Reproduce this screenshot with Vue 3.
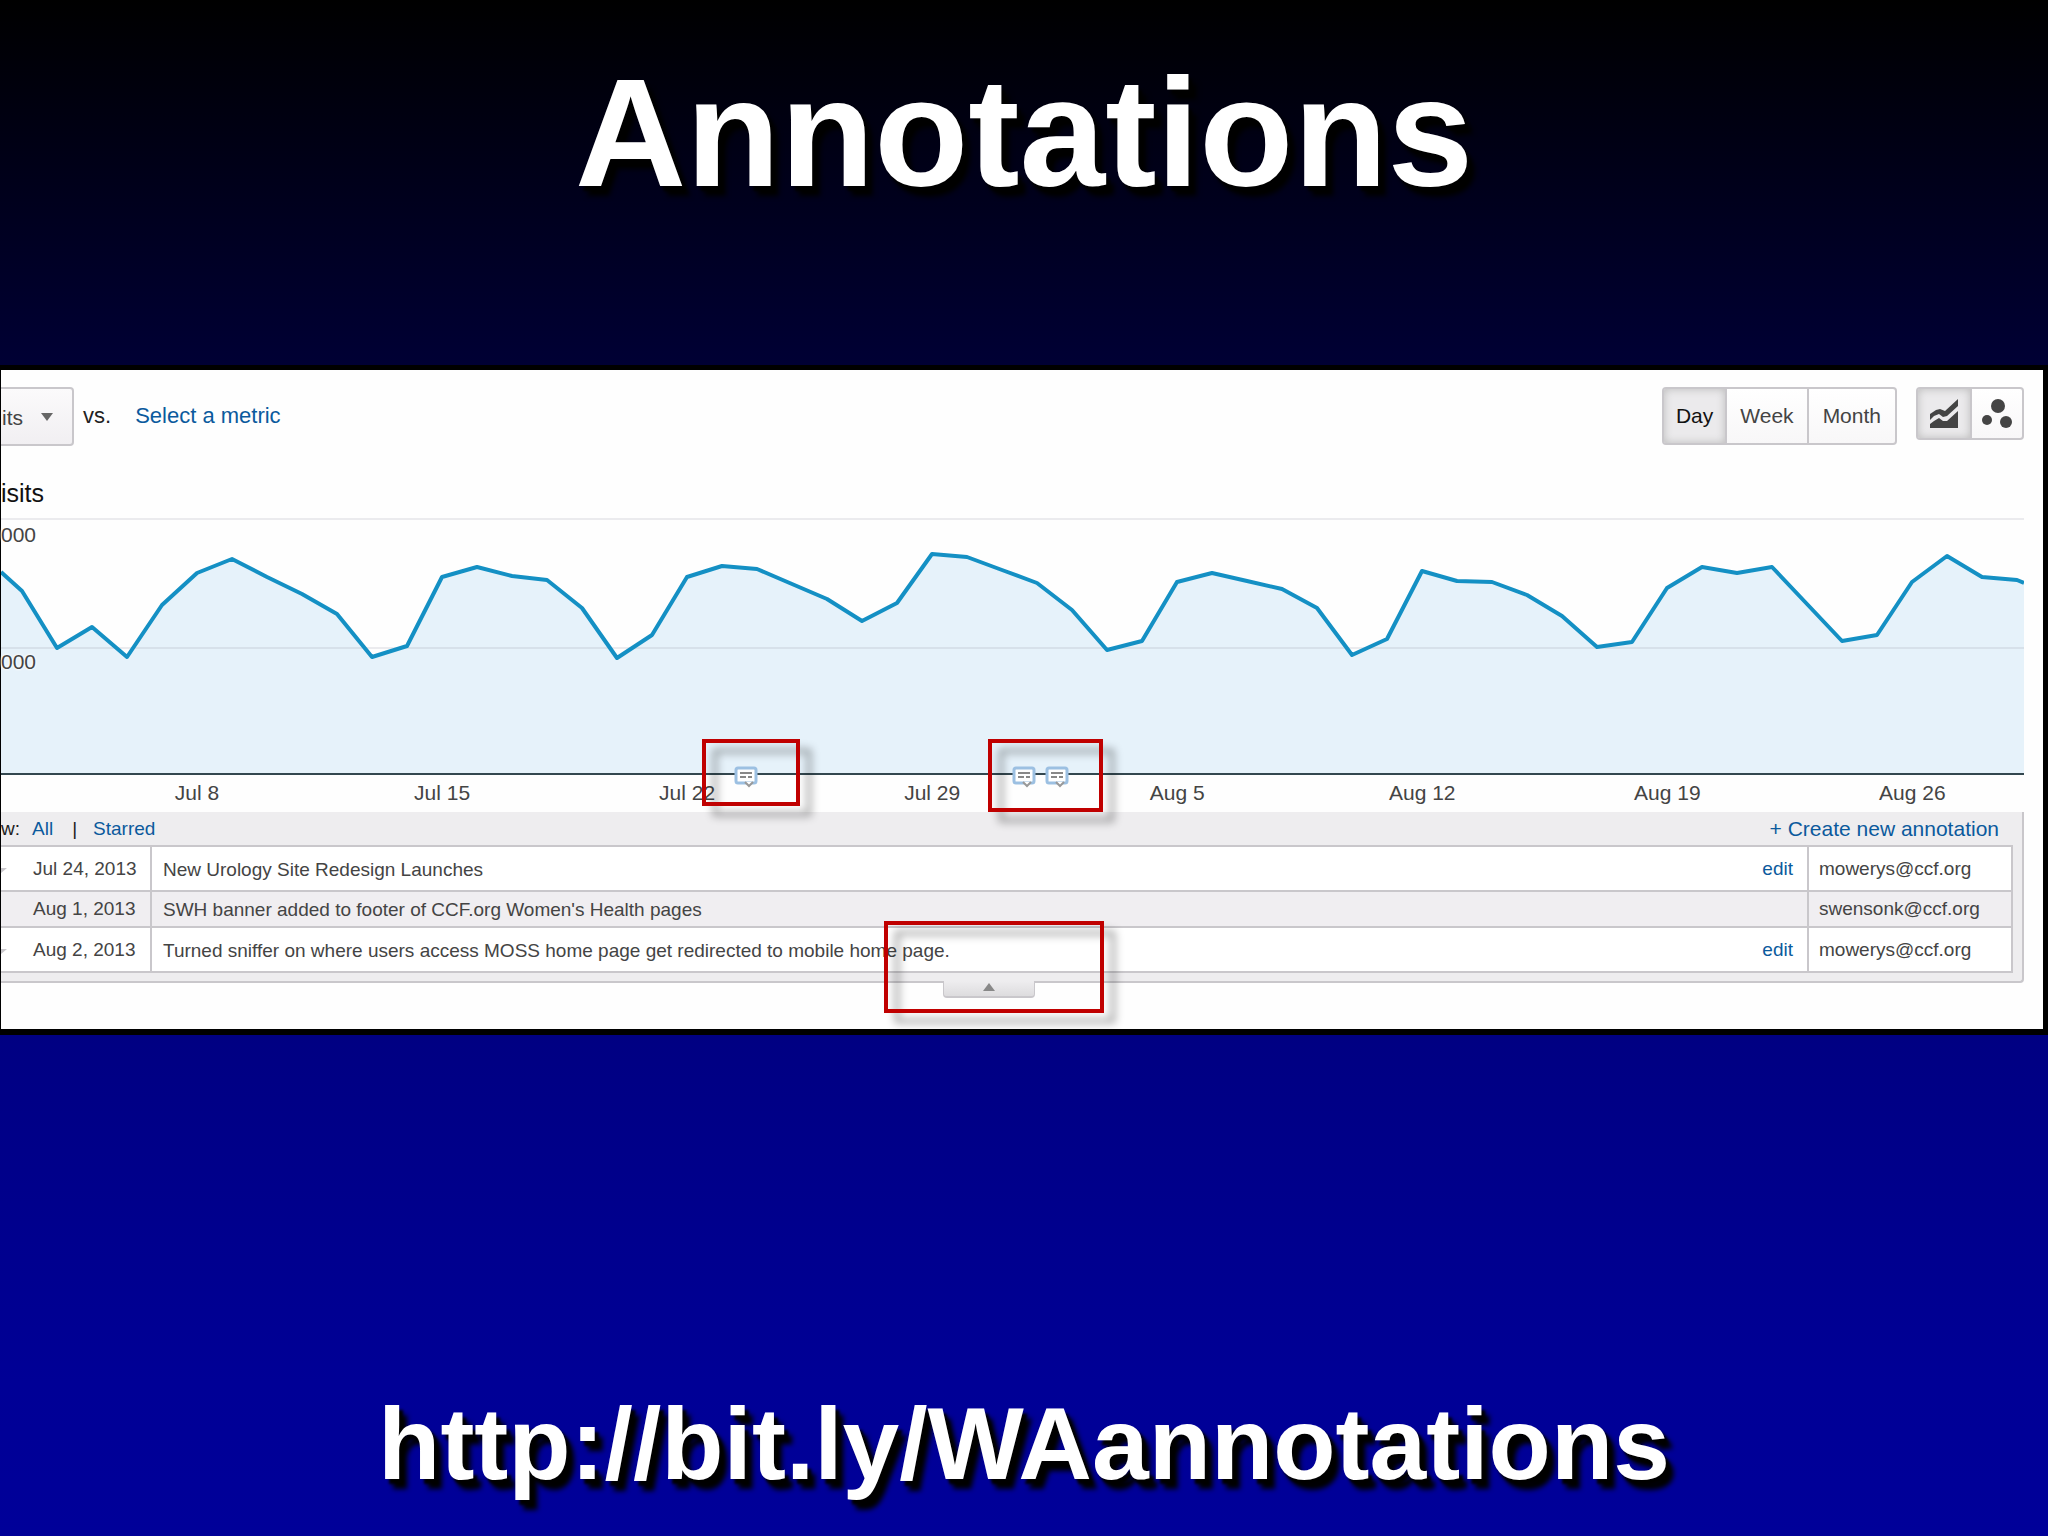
<script setup>
import { computed, ref } from "vue";

const CHART_WIDTH = 2023;
const CHART_HEIGHT = 255;
const DAY_STEP = 35;
const FIRST_DAY = 21;

// Height of the line for each day, measured from the top gridline
const VISITS = [
  73, 130, 109, 139, 87, 55, 41, 59, 76, 96, 139, 128, 59, 49, 58, 62, 90, 140,
  117, 59, 48, 51, 66, 81, 103, 85, 36, 39, 52, 65, 92, 132, 123, 64, 55, 63, 71,
  90, 137, 121, 53, 63, 64, 77, 98, 129, 124, 70, 49, 55, 49, 86, 123, 117, 64, 38,
  59, 62,
];

const WEEKS = [
  "Jul 8",
  "Jul 15",
  "Jul 22",
  "Jul 29",
  "Aug 5",
  "Aug 12",
  "Aug 19",
  "Aug 26",
];

const RANGES = ["Day", "Week", "Month"];

const MARKERS = [745, 1023, 1056];

const ANNOTATIONS = [
  {
    date: "Jul 24, 2013",
    text: "New Urology Site Redesign Launches",
    owner: "mowerys@ccf.org",
    editable: true,
  },
  {
    date: "Aug 1, 2013",
    text: "SWH banner added to footer of CCF.org Women's Health pages",
    owner: "swensonk@ccf.org",
    editable: false,
  },
  {
    date: "Aug 2, 2013",
    text: "Turned sniffer on where users access MOSS home page get redirected to mobile home page.",
    owner: "mowerys@ccf.org",
    editable: true,
  },
];

const range = ref("Day");
const view = ref("line");

const line = computed(() => {
  const points = VISITS.map((y, i) => `${FIRST_DAY + i * DAY_STEP},${y}`);
  return ["0,54", ...points, `${CHART_WIDTH},65`].join(" ");
});
const area = computed(
  () => `0,${CHART_HEIGHT} ${line.value} ${CHART_WIDTH},${CHART_HEIGHT}`
);
</script>

<template>
  <main class="slide">
    <h1 class="title">Annotations</h1>

    <section class="panel">
      <div class="toolbar">
        <div class="metric">
          <select class="metric-select" aria-label="Metric">
            <option>its</option>
          </select>
          <svg class="caret" viewBox="0 0 12 8"><path d="M0 0h12L6 8z" /></svg>
        </div>
        <span class="versus">vs.</span>
        <a class="link select-metric" href="#metric">Select a metric</a>

        <div class="ranges">
          <button
            v-for="r in RANGES"
            :key="r"
            :class="['button', { 'button-active': r === range }]"
            @click="range = r"
          >
            {{ r }}
          </button>
        </div>
        <div class="views">
          <button
            :class="['button', 'button-icon', { 'button-active': view === 'line' }]"
            aria-label="Line chart"
            @click="view = 'line'"
          >
            <svg class="icon" viewBox="0 0 30 30">
              <path d="M1 15l6-4 4-1 5 2L29 0v7L18 17l-4 1-4-3-5 2-4 4z" />
              <path d="M1 25l4-3 5-3 4 3h4l11-10v17H1z" />
            </svg>
          </button>
          <button
            :class="['button', 'button-icon', { 'button-active': view === 'motion' }]"
            aria-label="Motion chart"
            @click="view = 'motion'"
          >
            <svg class="icon" viewBox="0 0 30 30">
              <circle cx="16" cy="7" r="7" />
              <circle cx="5" cy="21" r="5" />
              <circle cx="24" cy="23" r="6" />
            </svg>
          </button>
        </div>
      </div>

      <h2 class="chart-title">isits</h2>

      <div class="chart">
        <svg
          class="plot"
          :viewBox="`0 0 ${CHART_WIDTH} ${CHART_HEIGHT}`"
          preserveAspectRatio="none"
        >
          <polygon class="area" :points="area" />
          <path class="grid" :d="`M0 1H${CHART_WIDTH}M0 130H${CHART_WIDTH}`" />
          <polyline class="line" :points="line" />
        </svg>
        <span class="scale scale-top">000</span>
        <span class="scale scale-middle">000</span>
        <svg
          v-for="m in MARKERS"
          :key="m"
          class="marker"
          :style="{ left: `${(m / CHART_WIDTH) * 100}%` }"
          viewBox="0 0 24 22"
        >
          <path
            class="bubble"
            d="M4 2h16q2 0 2 2v11q0 2-2 2H4q-2 0-2-2V4q0-2 2-2z"
          />
          <path class="bubble-tail" d="M11 16l4 4 4-4" />
          <path class="bubble-text" d="M6 7h12M6 11h6M14 11h4" />
        </svg>
      </div>
      <div class="weeks">
        <span v-for="w in WEEKS" :key="w" class="week">{{ w }}</span>
      </div>

      <div class="drawer">
        <div class="drawer-head">
          <span class="show">w:</span>
          <a class="link" href="#all">All</a>
          <span class="separator">|</span>
          <a class="link" href="#starred">Starred</a>
          <a class="link create" href="#create">+ Create new annotation</a>
        </div>
        <table class="annotations">
          <tbody>
            <tr v-for="a in ANNOTATIONS" :key="a.date">
              <td class="star">
                <svg v-if="a.editable" width="6" height="8" viewBox="0 0 6 8">
                  <path d="M0 1h6L0 6z" />
                </svg>
              </td>
              <td class="date">{{ a.date }}</td>
              <td class="text">{{ a.text }}</td>
              <td class="edit">
                <a v-if="a.editable" class="link" href="#edit">edit</a>
              </td>
              <td class="owner">{{ a.owner }}</td>
            </tr>
          </tbody>
        </table>
      </div>
      <button class="collapse" aria-label="Hide annotations">
        <svg width="12" height="8" viewBox="0 0 12 8"><path d="M0 8h12L6 0z" /></svg>
      </button>

      <div class="callout callout-first" />
      <div class="callout callout-second" />
      <div class="callout callout-collapse" />
    </section>

    <a class="url" href="http://bit.ly/WAannotations">http://bit.ly/WAannotations</a>
  </main>
</template>

<style>
body {
  margin: 0;
}
</style>

<style scoped>
.slide {
  box-sizing: border-box;
  display: flex;
  flex-direction: column;
  min-height: 100vh;
  padding: 44px 0 32px;
  overflow: hidden;
  background: linear-gradient(
    #000000,
    #000033 23%,
    #000083 68%,
    #000096 90%,
    #000099
  );
  font-family: "Liberation Sans", Arial, sans-serif;
}

.title,
.url {
  color: white;
  font-weight: bold;
  text-align: center;
  text-decoration: none;
  text-shadow: 4px 5px 3px black, 8px 10px 5px black;
}

.title {
  margin: 0 0 143px;
  font-size: 154px;
  line-height: 178px;
}

.url {
  align-self: center;
  margin-top: auto;
  font-size: 102px;
  line-height: 120px;
}

.panel {
  position: relative;
  border: solid black;
  border-width: 5px 5px 6px 1px;
  background: #fefefe;
  color: #444;
  font-size: 19px;
}

.link {
  color: #0b5a9d;
  text-decoration: none;
}

/* TOOLBAR */
.toolbar {
  display: flex;
  align-items: flex-start;
  height: 59px;
  padding: 17px 19px 0 0;
  font-size: 21px;
  line-height: 58px;
}

.metric {
  position: relative;
}

.metric-select {
  appearance: none;
  box-sizing: border-box;
  width: 73px;
  height: 59px;
  padding: 0 0 0 1px;
  border: 2px solid #c9c7cb;
  border-left: none;
  border-radius: 0 4px 4px 0;
  background: linear-gradient(#fbfafb, #f1eff2);
  color: #444;
  font: inherit;
}

.caret {
  position: absolute;
  top: 26px;
  left: 40px;
  width: 12px;
  height: 8px;
  fill: #666;
}

.versus {
  margin: 0 24px 0 9px;
  color: #222;
  font-size: 22px;
}

.select-metric {
  font-size: 22px;
}

.ranges,
.views {
  display: flex;
}

.ranges {
  height: 58px;
  margin-left: auto;
}

.views {
  height: 53px;
  margin-left: 19px;
}

.button {
  display: flex;
  align-items: center;
  justify-content: center;
  padding: 0 13px;
  border: 2px solid #c9c7cb;
  border-left-width: 0;
  background: linear-gradient(#fff, #f8f7f8);
  color: #444;
  font: inherit;
  line-height: 24px;
}

.button:first-child {
  padding: 0 12px;
  border-left-width: 2px;
  border-radius: 4px 0 0 4px;
}

.button:last-child {
  padding: 0 14px;
  border-radius: 0 4px 4px 0;
}

.button-active {
  background: #ebeaec;
  box-shadow: inset 0 0 8px #bbb;
  color: #111;
}

.button-icon {
  width: 52px;
  fill: #444;
}

.button-icon:first-child {
  width: 56px;
}

.icon {
  flex: none;
  width: 30px;
  height: 30px;
}

/* CHART */
.chart-title {
  margin: 32px 0 10px;
  color: #111;
  font-size: 25px;
  font-weight: normal;
  line-height: 30px;
}

.chart {
  position: relative;
  margin-right: 19px;
  border-bottom: 2px solid #33474f;
}

.plot {
  display: block;
  width: 100%;
  height: 255px;
}

.area {
  fill: #e6f2fa;
}

.grid {
  fill: none;
  stroke: #889;
  stroke-opacity: 0.16;
  stroke-width: 2;
}

.line {
  fill: none;
  stroke: #1490c4;
  stroke-width: 4;
  stroke-linejoin: round;
  vector-effect: non-scaling-stroke;
}

.scale {
  position: absolute;
  left: 0;
  font-size: 21px;
  line-height: 24px;
  text-shadow: 0 0 3px white, 0 0 3px white;
}

.scale-top {
  top: 5px;
}

.scale-middle {
  top: 132px;
}

.marker {
  position: absolute;
  bottom: -15px;
  width: 24px;
  height: 22px;
  transform: translateX(-50%);
}

.bubble {
  fill: white;
  stroke: #9cc0e2;
  stroke-width: 3;
}

.bubble-tail {
  fill: white;
  stroke: #999;
  stroke-width: 2;
}

.bubble-text {
  stroke: #888;
  stroke-width: 2;
}

.weeks {
  display: flex;
  margin-right: 19px;
  padding: 6px 0 7px 3.6%;
  font-size: 21px;
  line-height: 24px;
}

.week {
  flex: 0 0 12.57%;
  text-align: center;
}

/* ANNOTATIONS */
.drawer {
  margin-right: 19px;
  padding: 0 9px 8px 0;
  border: solid #c9c7cb;
  border-width: 0 2px 2px 0;
  border-radius: 0 0 4px 0;
  background: #eeedef;
}

.drawer-head {
  display: flex;
  align-items: center;
  height: 33px;
}

.show,
.separator {
  color: #222;
}

.show {
  margin-right: 12px;
}

.separator {
  margin: 0 16px 0 19px;
}

.create {
  margin-left: auto;
  padding-right: 14px;
  font-size: 21px;
}

.annotations {
  width: 100%;
  border: solid #c9c7cb;
  border-width: 2px 2px 0 0;
  border-spacing: 0;
  line-height: 22px;
}

.annotations td {
  box-sizing: border-box;
  height: 45px;
  padding: 0;
  border-bottom: 2px solid #c9c7cb;
  background: white;
}

.annotations tr:nth-child(even) td {
  height: 36px;
  background: #f0eef1;
}

.annotations .star {
  width: 32px;
  fill: #c9c7cb;
}

.annotations .date {
  width: 119px;
  border-right: 2px solid #c9c7cb;
  white-space: nowrap;
}

.annotations .text {
  padding: 2px 0 0 11px;
}

.annotations .edit {
  width: 60px;
  padding-right: 14px;
  text-align: right;
}

.annotations .owner {
  width: 204px;
  padding-left: 10px;
  border-left: 2px solid #c9c7cb;
}

.collapse {
  display: flex;
  justify-content: center;
  width: 92px;
  height: 17px;
  margin: -2px 0 31px 46.13%;
  padding: 2px 0 0;
  border: solid #c9c7cb;
  border-width: 0 1px 2px;
  border-radius: 0 0 4px 4px;
  background: linear-gradient(#eeedef, #dddcde);
  fill: #888;
}

/* CALLOUTS */
.callout {
  position: absolute;
  box-sizing: border-box;
  border: 4px solid #c00000;
  filter: drop-shadow(11px 10px 4px rgba(0, 0, 0, 0.4));
  pointer-events: none;
}

.callout-first {
  top: 369px;
  left: 34.33%;
  width: 98px;
  height: 67px;
}

.callout-second {
  top: 369px;
  left: 48.33%;
  width: 115px;
  height: 73px;
}

.callout-collapse {
  top: 551px;
  left: 43.24%;
  width: 220px;
  height: 92px;
}
</style>
